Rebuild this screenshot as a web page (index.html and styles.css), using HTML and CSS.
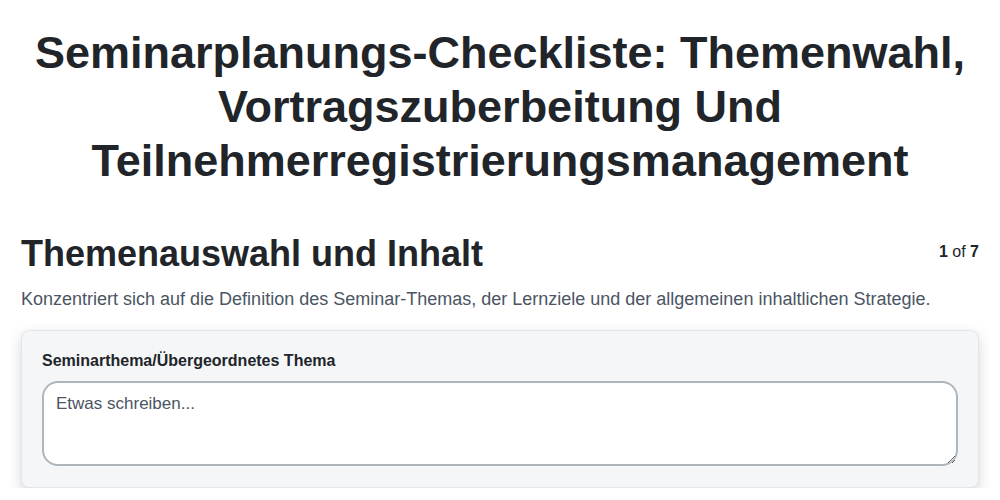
FILE: index.html
```html
<!DOCTYPE html>
<html lang="de">
<head>
<meta charset="utf-8">
<title>Seminarplanungs-Checkliste</title>
<link rel="stylesheet" href="styles.css">
</head>
<body>
<main class="page">
  <h1 class="title">Seminarplanungs-Checkliste: Themenwahl, Vortragszuberbeitung Und Teilnehmerregistrierungsmanagement</h1>
  <section class="section">
    <div class="section-head">
      <h2 class="section-title">Themenauswahl und Inhalt</h2>
      <div class="counter"><b>1</b> of <b>7</b></div>
    </div>
    <p class="section-desc">Konzentriert sich auf die Definition des Seminar-Themas, der Lernziele und der allgemeinen inhaltlichen Strategie.</p>
    <div class="card">
      <label class="field-label" for="f1">Seminarthema/Übergeordnetes Thema</label>
      <textarea id="f1" class="field-input" placeholder="Etwas schreiben..."></textarea>
    </div>
  </section>
</main>
</body>
</html>
```

FILE: styles.css
```css
* { box-sizing: border-box; }
html, body { margin: 0; padding: 0; background: #ffffff; }
body {
  font-family: "Liberation Sans", Arial, sans-serif;
  color: #212529;
}
.page {
  padding: 0 21px;
}
.title {
  margin: 26px 0 0;
  text-align: center;
  font-size: 45px;
  line-height: 54px;
  font-weight: 700;
  color: #212529;
}
.section {
  margin-top: 44px;
}
.section-head {
  display: flex;
  justify-content: space-between;
  align-items: flex-start;
}
.section-title {
  margin: 0;
  font-size: 36px;
  line-height: 44px;
  font-weight: 700;
  color: #212529;
}
.counter {
  font-size: 16px;
  line-height: 20px;
  padding-top: 10px;
  color: #212529;
}
.section-desc {
  margin: 10px 0 0;
  font-size: 18px;
  line-height: 27px;
  color: #4b5563;
}
.card {
  margin-top: 17px;
  background: #f5f6f8;
  border: 1px solid #e3e5e9;
  border-radius: 8px;
  box-shadow: 0 5px 14px rgba(0,0,0,0.16);
  padding: 20px 20px 21px;
  display: flex;
  flex-direction: column;
}
.field-label {
  font-size: 16px;
  line-height: 20px;
  font-weight: 700;
  color: #212529;
  margin-bottom: 10px;
}
.field-input {
  width: 100%;
  height: 85px;
  border: 2px solid #adb5bd;
  border-radius: 16px;
  background: #ffffff;
  padding: 10px 12px;
  font-family: "Liberation Sans", Arial, sans-serif;
  font-size: 17px;
  line-height: 22px;
  color: #212529;
  resize: vertical;
}
.field-input::placeholder {
  color: #4b5563;
  opacity: 1;
}
```
